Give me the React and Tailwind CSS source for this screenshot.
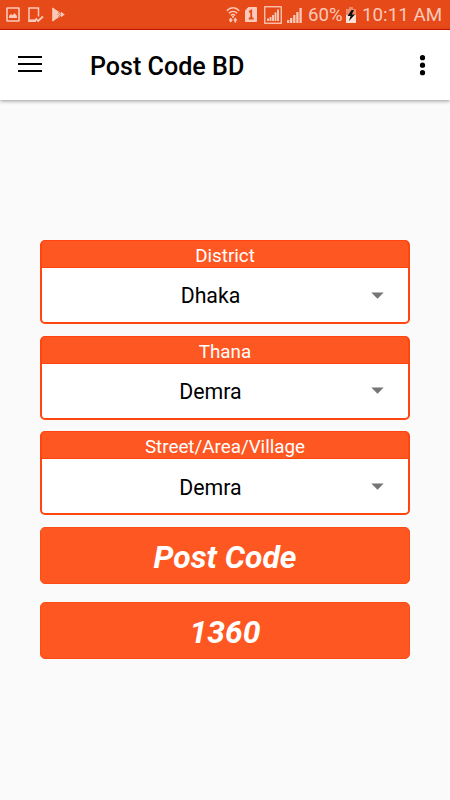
const fields = [
   { label: "District", value: "Dhaka" },
   { label: "Thana", value: "Demra" },
   { label: "Street/Area/Village", value: "Demra" },
];

function StatusBar() {
   return (
      <div className="flex h-[30px] shrink-0 items-center border-b border-[#dd1500] bg-[#e64a19] pr-[7px] pl-[6px] text-[#fbc9b9]">
         {/* Notifications */}
         <svg width="14" height="15" viewBox="0 0 14 15" fill="none">
            <rect x="1" y="1" width="12" height="13" rx="0.5" stroke="currentColor" strokeWidth="1.6" />
            <path d="M3 11V9l2-2 1.500 1.200L8.500 6 11 9v2z" fill="currentColor" />
         </svg>
         <svg className="ml-2" width="16" height="16" viewBox="0 0 16 16" fill="none" stroke="currentColor">
            <path d="M8 14.300H1V1h9.500v8.500" strokeWidth="1.500" />
            <path d="M.5 13.500H8" strokeWidth="2.200" />
            <path d="M7.500 11.500l2.700 2.500 4.800-4.500" strokeWidth="1.800" />
         </svg>
         <svg className="ml-[7px]" width="15" height="15" viewBox="0 0 15 15">
            <path d="M1.200.8L9 5.300 6.300 7.500 9 9.700 1.200 14.200z" fill="currentColor" />
            <path d="M1.500 1l9.500 8.500M1.500 14L11 5.500" stroke="currentColor" strokeWidth="1.400" fill="none" />
            <path d="M10.500 5.300l3.300 2.200-3.300 2.200-2-2.200z" fill="currentColor" />
            <path d="M7 4.800l3 2.700-3 2.700" stroke="#e64a19" strokeWidth=".6" fill="none" />
         </svg>

         {/* Wifi, SIM, signal */}
         <svg className="ml-auto" width="14" height="16" viewBox="0 0 14 16" fill="none" stroke="currentColor">
            <path d="M.8 3.700C4.300-.1 9.700-.1 13.200 3.700M2.800 6.200c2.400-2.300 6-2.300 8.400 0M4.800 8.500c1.300-1.100 3.100-1.100 4.400 0" strokeWidth="1.500" />
            <path d="M4.700 11v2.500M9.300 15.500V13" strokeWidth="1.700" />
            <path d="M2.500 12.600h4.400l-2.200 3.200zM7.100 13.600h4.400l-2.200-3.200z" fill="currentColor" stroke="none" />
            <circle cx="7" cy="9.800" r="1.100" fill="currentColor" stroke="none" />
         </svg>
         <svg className="ml-[5px]" width="12" height="15" viewBox="0 0 12 15">
            <path d="M3.500 0H11a1 1 0 0 1 1 1v13a1 1 0 0 1-1 1H1a1 1 0 0 1-1-1V3.500z" fill="currentColor" />
            <path d="M4 5l2.200-1.300V11M3.800 11.500h4.800" stroke="#e64a19" strokeWidth="1.800" fill="none" />
         </svg>
         <svg className="ml-[7px]" width="18" height="18" viewBox="0 0 18 18" fill="none" stroke="currentColor">
            <rect x=".75" y=".75" width="16.500" height="16.500" strokeWidth="1.300" />
            <path d="M4 15v-2.500M6.500 15v-4M9 15V9M11.500 15V6.500M14 15V3.500" strokeWidth="1.900" />
         </svg>
         <svg className="ml-[5px]" width="15" height="16" viewBox="0 0 15 16" fill="none" stroke="currentColor">
            <path d="M1.200 16v-3M4.200 16v-5M7.300 16V8M10.400 16V5M13.600 16V1" strokeWidth="2.300" />
         </svg>
         <span className="ml-[6px] w-[36px] pt-px text-[18.6px] leading-none whitespace-nowrap">60%</span>
         <svg className="ml-[2px]" width="10" height="16" viewBox="0 0 10 16">
            <path d="M3 0h4v2h3v14H0V2h3z" fill="currentColor" fillOpacity=".5" />
            <path d="M0 8h10v8H0z" fill="#ffe0d6" />
            <path d="M5.500 3L1.500 9h3l-1.500 5 6-6.500H5.800L8 3z" fill="#101010" />
         </svg>
         <span className="ml-[6px] w-[81px] pt-px text-[18.800px] leading-none whitespace-nowrap">10:11 AM</span>
      </div>
   );
}

function AppBar() {
   return (
      <header className="z-10 flex h-[70px] shrink-0 items-center bg-white pr-6 pl-[18px] shadow-[0_1px_4px_rgba(0,0,0,0.4)]">
         <button type="button" aria-label="Menu" className="-mt-[2px] flex w-6 flex-col gap-[5px]">
            <span className="h-[2px] bg-black" />
            <span className="h-[2px] bg-black" />
            <span className="h-[2px] bg-black" />
         </button>
         <h1 className="ml-12 pt-[3px] text-[25.1px] font-medium whitespace-nowrap text-black">
            Post Code BD
         </h1>
         <button type="button" aria-label="More" className="ml-auto">
            <svg width="7" height="21" viewBox="0 0 7 21">
               <circle cx="3.500" cy="2.700" r="2.600" />
               <circle cx="3.500" cy="10.200" r="2.600" />
               <circle cx="3.500" cy="17.700" r="2.600" />
            </svg>
         </button>
      </header>
   );
}

function Field({ label, value }) {
   return (
      <div className="h-[84px] overflow-hidden rounded-[5px] border-2 border-t border-[#ff4510] bg-[#ff5722]">
         <div className="flex h-[27px] items-center justify-center border-b border-[#ff4510] pt-[5px] text-[18.800px] leading-none text-white">
            {label}
         </div>
         <div className="flex h-[54px] items-center bg-white pr-6 pl-[8px]">
            <span className="flex-1 pt-[2px] text-center text-[21.3px] leading-none text-black">
               {value}
            </span>
            <svg width="13" height="7" viewBox="0 0 13 7">
               <path d="M.3.500h12.400L6.500 6.800z" fill="#757575" />
            </svg>
         </div>
      </div>
   );
}

export default function App() {
   return (
      <div className="flex h-[800px] w-[450px] flex-col overflow-hidden bg-[#fafafa] font-['Roboto',sans-serif]">
         <StatusBar />
         <AppBar />
         <main className="flex flex-1 flex-col px-10 pt-[140px]">
            <div className="flex flex-col gap-[11.7px]">
               {fields.map((field) => (
                  <Field key={field.label} label={field.label} value={field.value} />
               ))}
            </div>
            <button
               type="button"
               className="mt-[11.6px] h-[57px] shrink-0 rounded-[5px] border border-[#ff4c15] bg-[#ff5722] pt-[4px] text-[31.800px] leading-none font-bold text-white italic"
            >
               Post Code
            </button>
            <div className="mt-[18px] flex h-[57px] shrink-0 items-center justify-center rounded-[5px] border border-[#ff4c15] bg-[#ff5722] pt-[4px] text-[31.800px] leading-none font-bold text-white italic">
               1360
            </div>
         </main>
      </div>
   );
}
